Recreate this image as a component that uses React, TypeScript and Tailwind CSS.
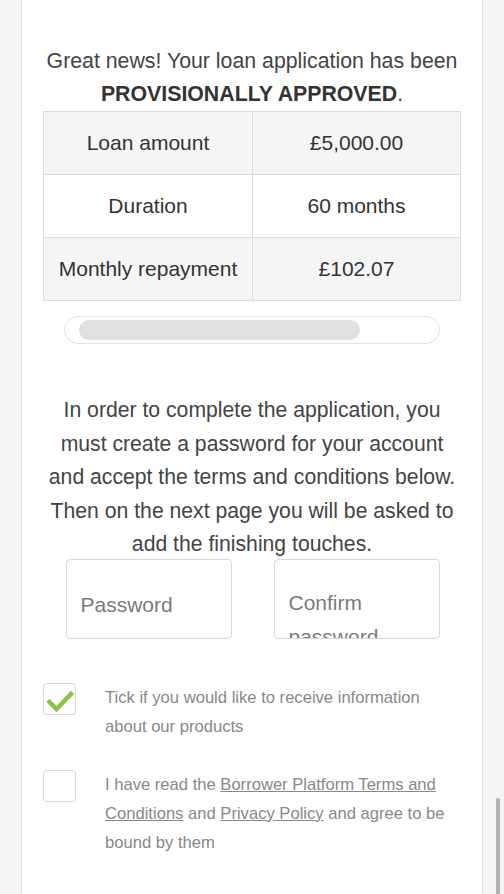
const rows = [
  { label: "Loan amount", value: "£5,000.00", shaded: true },
  { label: "Duration", value: "60 months", shaded: false },
  { label: "Monthly repayment", value: "£102.07", shaded: true },
];

function Tick() {
  return (
    <svg width="33" height="32" viewBox="0 0 33 32" className="block">
      <path
        d="M5.5 18 L12.5 25 L27 10"
        fill="none"
        stroke="#8cc14a"
        strokeWidth="4.5"
        strokeLinecap="square"
        strokeLinejoin="miter"
      />
    </svg>
  );
}

export default function App() {
  return (
    <div
      className="relative h-[894px] overflow-hidden bg-[#f4f4f4] text-[#3a3a3a]"
      style={{ fontFamily: '"Liberation Sans", Arial, sans-serif' }}
    >
      <div className="ml-[21px] h-full w-[462px] border-x border-[#dcdcdc] bg-white px-[21px] pt-[45px]">
        <p className="text-center text-[21.3px] leading-[33px] text-[#444]">
          Great news! Your loan application has been
          <br />
          <strong className="font-bold text-[#333]">PROVISIONALLY APPROVED</strong>.
        </p>

        <table className="w-full table-fixed border-collapse text-[21px] text-[#333]">
          <tbody>
            {rows.map((r) => (
              <tr key={r.label} className={r.shaded ? "bg-[#f5f5f5]" : "bg-white"}>
                <td className="h-[63px] w-[209px] border border-[#dcdcdc] text-center">{r.label}</td>
                <td className="h-[63px] border border-[#dcdcdc] text-center">{r.value}</td>
              </tr>
            ))}
          </tbody>
        </table>

        <div className="mx-[21px] mt-[15px] h-[28px] rounded-full border border-[#e4e4e4] px-[14px] pt-[3px]">
          <div className="h-[20px] w-[281px] rounded-full bg-[#e0e0e0]" />
        </div>

        <p className="mt-[49px] text-center text-[21.2px] leading-[33.5px] text-[#444]">
          In order to complete the application, you
          <br />
          must create a password for your account
          <br />
          and accept the terms and conditions below.
          <br />
          Then on the next page you will be asked to
          <br />
          add the finishing touches.
        </p>

        <div className="-mt-[2px] flex justify-center gap-[42px] pl-px">
          <div className="h-[80px] w-[166px] overflow-hidden rounded-[4px] border border-[#d9d9d9] pl-[14px] pt-[28px] text-[21px] leading-[34px] text-[#7a7a7a]">
            Password
          </div>
          <div className="h-[80px] w-[166px] overflow-hidden rounded-[4px] border border-[#d9d9d9] pl-[14px] pt-[26px] text-[21px] leading-[34px] text-[#7a7a7a]">
            Confirm
            <br />
            password
          </div>
        </div>

        <div className="mt-[43px] flex items-start gap-[29px] text-[16.6px] leading-[29px] text-[#888]">
          <div className="mt-px h-[32px] w-[33px] shrink-0 rounded-[3px] border border-[#d9d9d9]">
            <Tick />
          </div>
          <p className="mt-px">
            Tick if you would like to receive information
            <br />
            about our products
          </p>
        </div>

        <div className="mt-[28px] flex items-start gap-[29px] text-[16.6px] leading-[29px] text-[#888]">
          <div className="mt-px h-[32px] w-[33px] shrink-0 rounded-[3px] border border-[#d9d9d9]" />
          <p className="mt-px">
            I have read the <span className="underline">Borrower Platform Terms and</span>
            <br />
            <span className="underline">Conditions</span> and <span className="underline">Privacy Policy</span> and agree to be
            <br />
            bound by them
          </p>
        </div>
      </div>

      <div className="absolute right-[4px] top-[798px] h-[100px] w-[4px] rounded-full bg-[#b3b3b3]" />
    </div>
  );
}
